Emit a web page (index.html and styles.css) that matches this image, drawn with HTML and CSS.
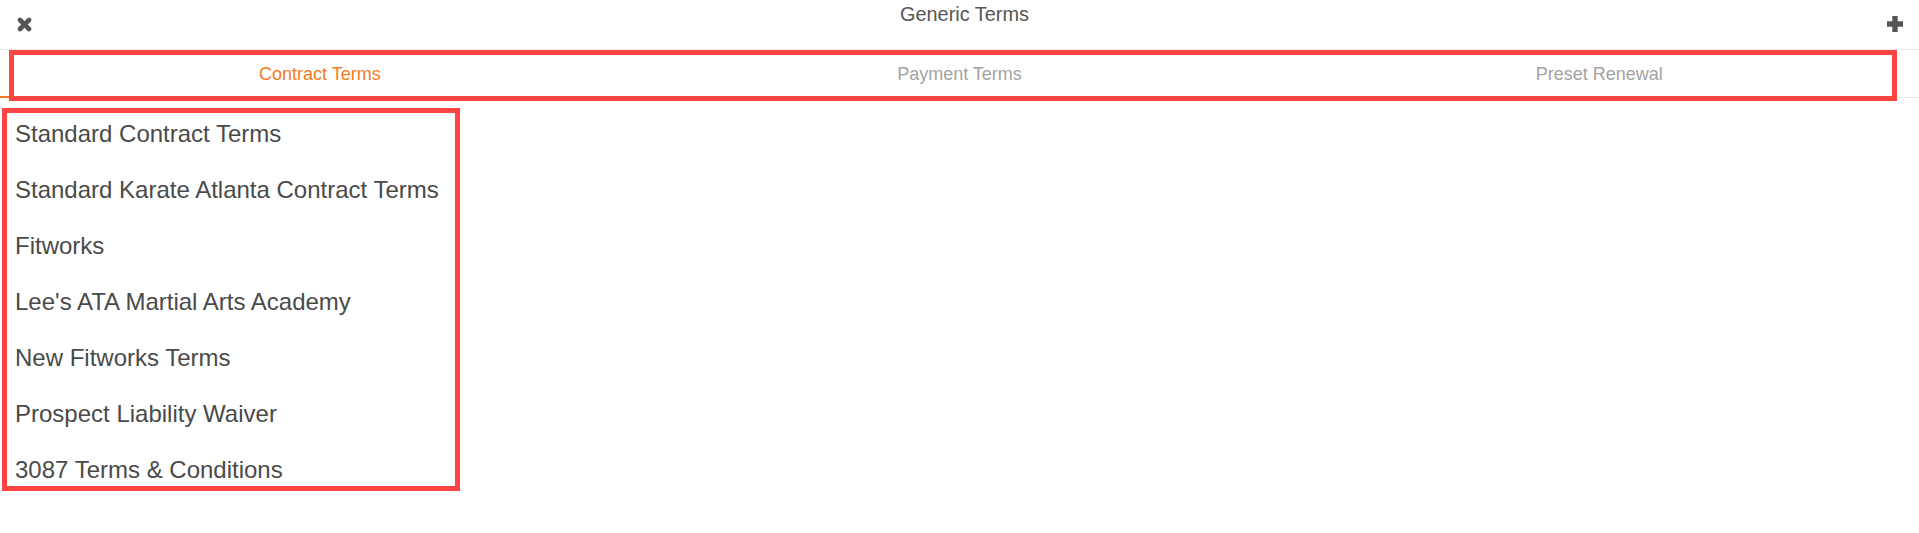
FILE: index.html
```html
<!DOCTYPE html>
<html lang="en">
  <head>
    <meta charset="UTF-8" />
    <meta name="viewport" content="width=device-width, initial-scale=1.0" />
    <title>Generic Terms</title>
    <link rel="stylesheet" href="styles.css">
  </head>
  <body>
    <div class="header">
      <a href="#" class="icon-btn close-btn" title="Close">
        <svg width="15" height="15" viewBox="0 0 15 15">
          <path d="M3 3 L12 12 M12 3 L3 12" stroke="#555" stroke-width="4.6" stroke-linecap="round" fill="none" />
        </svg>
      </a>
      <h1 class="title">Generic Terms</h1>
      <a href="#" class="icon-btn add-btn" title="Add">
        <svg width="18" height="18" viewBox="0 0 18 18">
          <path d="M9 1 V17 M1 9 H17" stroke="#555" stroke-width="5.4" stroke-linecap="butt" fill="none" />
        </svg>
      </a>
    </div>

    <div class="tabs">
      <a href="#" class="tab active">Contract Terms</a>
      <a href="#" class="tab">Payment Terms</a>
      <a href="#" class="tab">Preset Renewal</a>
      <!-- highlight box around the tab bar -->
      <div class="tabs-highlight"></div>
    </div>

    <ul class="terms-list">
      <li>Standard Contract Terms</li>
      <li>Standard Karate Atlanta Contract Terms</li>
      <li>Fitworks</li>
      <li>Lee's ATA Martial Arts Academy</li>
      <li>New Fitworks Terms</li>
      <li>Prospect Liability Waiver</li>
      <li>3087 Terms &amp; Conditions</li>
    </ul>
  </body>
</html>
```

FILE: styles.css
```css
body {
  margin: 0;
  background: #fff;
  font-family: "Liberation Sans", Arial, sans-serif;
  color: #4d4d4d;
}

.header {
  display: grid;
  grid-template-columns: 1fr auto 1fr;
  align-items: start;
  height: 49px;
  border-bottom: 1px solid #e6e6e6;
}

.icon-btn {
  display: block;
  line-height: 0;
}

.close-btn {
  justify-self: start;
  margin: 17px 0 0 17px;
}

.add-btn {
  justify-self: end;
  margin: 15px 15px 0 0;
}

.title {
  margin: 0;
  padding: 3px 0 0 10px;
  font-size: 19.9px;
  font-weight: normal;
  color: #555;
}

.tabs {
  position: relative;
  display: flex;
  border-bottom: 1px solid #e5e5e5;
}

.tab {
  flex: 1;
  text-align: center;
  padding: 14px 0 13px;
  font-size: 18px;
  line-height: 20px;
  color: #a3a3a3;
  text-decoration: none;
}

.tab.active {
  color: #f47b20;
  border-bottom: 2px solid #f47b20;
  margin-bottom: -1px;
  padding-bottom: 12px;
}

.tabs-highlight {
  position: absolute;
  top: 0;
  left: 9px;
  width: 1888px;
  height: 51px;
  box-sizing: border-box;
  border: 5px solid #ff4444;
  pointer-events: none;
}

.terms-list {
  list-style: none;
  box-sizing: border-box;
  width: 458px;
  margin: 10px 0 0 2px;
  padding: 7px 10px 2px 8px;
  border: 5px solid #ff4444;
  display: flex;
  flex-direction: column;
  gap: 28px;
}

.terms-list li {
  font-size: 24px;
  line-height: 28px;
  color: #4a4a4a;
  white-space: nowrap;
}
```
